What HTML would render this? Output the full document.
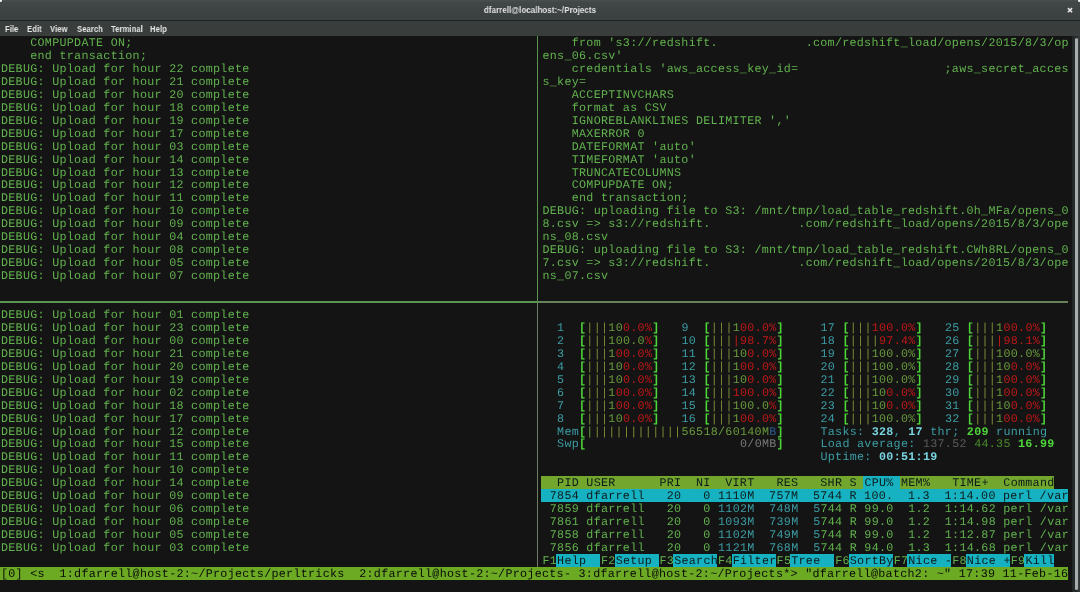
<!DOCTYPE html>
<html><head><meta charset="utf-8"><style>
html,body{margin:0;padding:0;width:1080px;height:592px;overflow:hidden;background:#141414;}
#tb{position:absolute;left:0;top:0;width:1080px;height:20px;background:linear-gradient(#4a4f4f 0px,#424747 2px,#3d4242 10px,#3b4040 20px);}
#tbl{position:absolute;left:0;top:19.6px;width:1080px;height:1.2px;background:#1e2222;}
#title{position:absolute;left:0;top:4.4px;width:1080px;height:20px;line-height:20px;text-align:center;font:bold 9.4px "Liberation Sans",sans-serif;color:#e2e2e2;transform:scaleX(0.86);transform-origin:539.5px 0;will-change:transform;}
#mb{position:absolute;left:0;top:20.8px;width:1080px;height:15.6px;background:#393e3d;}
.mi{position:absolute;top:24.3px;height:16px;line-height:16px;font:bold 9.3px "Liberation Sans",sans-serif;color:#e6e6e6;transform:scaleX(0.835);transform-origin:0 0;will-change:transform;}
#term{position:absolute;left:0;top:36.4px;width:1080px;height:556px;background:#141414;}
.s{position:absolute;height:12.95px;line-height:12.95px;font-family:"Liberation Mono",monospace;font-size:11.7px;white-space:pre;text-rendering:geometricPrecision;letter-spacing:0.297px;transform:translate(1.0px,0.9px);}
.b{font-weight:bold;}
.bgr{position:absolute;}
#wrap{position:absolute;left:0;top:0;width:1080px;height:592px;overflow:hidden;filter:blur(0.45px);}
</style></head><body><div id="wrap">
<div id="tb"></div><div id="tbl"></div><div id="title">dfarrell@localhost:~/Projects</div>
<div id="mb"></div>

<div class="mi" style="left:4.6px">File</div>
<div class="mi" style="left:26.5px">Edit</div>
<div class="mi" style="left:49.6px">View</div>
<div class="mi" style="left:76.9px">Search</div>
<div class="mi" style="left:110.6px">Terminal</div>
<div class="mi" style="left:150.4px">Help</div>
<div id="term"></div>
<div style="position:absolute;left:-1px;top:-1px;width:3px;height:3px;border-radius:50%;background:#f0f0f0"></div>
<div style="position:absolute;left:1078px;top:-1px;width:3px;height:3px;border-radius:50%;background:#f0f0f0"></div>
<svg style="position:absolute;left:1065px;top:6px" width="10" height="9" viewBox="0 0 10 9"><path d="M2.9 2.1 L7.1 6.3 M7.1 2.1 L2.9 6.3" stroke="#e8e8e8" stroke-width="1.5"/></svg>
<div style="position:absolute;left:1072px;top:36px;width:8px;height:556px;background:linear-gradient(90deg,#1c2020 0px,#252a2b 1.5px,#252a2b 5.8px,#3c4242 6.6px,#2a2f30 8px)"></div>
<div style="position:absolute;left:1074.8px;top:38px;width:3.3px;height:551.5px;border-radius:2px;background:#a8acac"></div>
<div style="position:absolute;left:536.85px;top:36.00px;width:1.5px;height:265.92px;background:#5a9650"></div>
<div style="position:absolute;left:536.90px;top:301.92px;width:1.4px;height:265.02px;background:#6e7c64"></div>
<div style="position:absolute;left:0;top:301.12px;width:537.60px;height:1.6px;background:#5a9650"></div>
<div style="position:absolute;left:537.60px;top:301.12px;width:530.68px;height:1.6px;background:#66825a"></div>
<div class="s" style="left:0.00px;top:36.00px;color:#62b24e">    COMPUPDATE ON;</div>
<div class="s" style="left:0.00px;top:48.95px;color:#62b24e">    end transaction;</div>
<div class="s" style="left:0.00px;top:61.90px;color:#62b24e">DEBUG: Upload for hour 22 complete</div>
<div class="s" style="left:0.00px;top:74.85px;color:#62b24e">DEBUG: Upload for hour 21 complete</div>
<div class="s" style="left:0.00px;top:87.80px;color:#62b24e">DEBUG: Upload for hour 20 complete</div>
<div class="s" style="left:0.00px;top:100.75px;color:#62b24e">DEBUG: Upload for hour 18 complete</div>
<div class="s" style="left:0.00px;top:113.70px;color:#62b24e">DEBUG: Upload for hour 19 complete</div>
<div class="s" style="left:0.00px;top:126.65px;color:#62b24e">DEBUG: Upload for hour 17 complete</div>
<div class="s" style="left:0.00px;top:139.60px;color:#62b24e">DEBUG: Upload for hour 03 complete</div>
<div class="s" style="left:0.00px;top:152.55px;color:#62b24e">DEBUG: Upload for hour 14 complete</div>
<div class="s" style="left:0.00px;top:165.50px;color:#62b24e">DEBUG: Upload for hour 13 complete</div>
<div class="s" style="left:0.00px;top:178.45px;color:#62b24e">DEBUG: Upload for hour 12 complete</div>
<div class="s" style="left:0.00px;top:191.40px;color:#62b24e">DEBUG: Upload for hour 11 complete</div>
<div class="s" style="left:0.00px;top:204.35px;color:#62b24e">DEBUG: Upload for hour 10 complete</div>
<div class="s" style="left:0.00px;top:217.30px;color:#62b24e">DEBUG: Upload for hour 09 complete</div>
<div class="s" style="left:0.00px;top:230.25px;color:#62b24e">DEBUG: Upload for hour 04 complete</div>
<div class="s" style="left:0.00px;top:243.20px;color:#62b24e">DEBUG: Upload for hour 08 complete</div>
<div class="s" style="left:0.00px;top:256.15px;color:#62b24e">DEBUG: Upload for hour 05 complete</div>
<div class="s" style="left:0.00px;top:269.10px;color:#62b24e">DEBUG: Upload for hour 07 complete</div>
<div class="s" style="left:0.00px;top:307.95px;color:#62b24e">DEBUG: Upload for hour 01 complete</div>
<div class="s" style="left:0.00px;top:320.90px;color:#62b24e">DEBUG: Upload for hour 23 complete</div>
<div class="s" style="left:0.00px;top:333.85px;color:#62b24e">DEBUG: Upload for hour 00 complete</div>
<div class="s" style="left:0.00px;top:346.80px;color:#62b24e">DEBUG: Upload for hour 21 complete</div>
<div class="s" style="left:0.00px;top:359.75px;color:#62b24e">DEBUG: Upload for hour 20 complete</div>
<div class="s" style="left:0.00px;top:372.70px;color:#62b24e">DEBUG: Upload for hour 19 complete</div>
<div class="s" style="left:0.00px;top:385.65px;color:#62b24e">DEBUG: Upload for hour 02 complete</div>
<div class="s" style="left:0.00px;top:398.60px;color:#62b24e">DEBUG: Upload for hour 18 complete</div>
<div class="s" style="left:0.00px;top:411.55px;color:#62b24e">DEBUG: Upload for hour 17 complete</div>
<div class="s" style="left:0.00px;top:424.50px;color:#62b24e">DEBUG: Upload for hour 12 complete</div>
<div class="s" style="left:0.00px;top:437.45px;color:#62b24e">DEBUG: Upload for hour 15 complete</div>
<div class="s" style="left:0.00px;top:450.40px;color:#62b24e">DEBUG: Upload for hour 11 complete</div>
<div class="s" style="left:0.00px;top:463.35px;color:#62b24e">DEBUG: Upload for hour 10 complete</div>
<div class="s" style="left:0.00px;top:476.30px;color:#62b24e">DEBUG: Upload for hour 14 complete</div>
<div class="s" style="left:0.00px;top:489.25px;color:#62b24e">DEBUG: Upload for hour 09 complete</div>
<div class="s" style="left:0.00px;top:502.20px;color:#62b24e">DEBUG: Upload for hour 06 complete</div>
<div class="s" style="left:0.00px;top:515.15px;color:#62b24e">DEBUG: Upload for hour 08 complete</div>
<div class="s" style="left:0.00px;top:528.10px;color:#62b24e">DEBUG: Upload for hour 05 complete</div>
<div class="s" style="left:0.00px;top:541.05px;color:#62b24e">DEBUG: Upload for hour 03 complete</div>
<div class="s" style="left:541.46px;top:36.00px;color:#62b24e">    from &#x27;s3://redshift.            .com/redshift_load/opens/2015/8/3/op</div>
<div class="s" style="left:541.46px;top:48.95px;color:#62b24e">ens_06.csv&#x27;</div>
<div class="s" style="left:541.46px;top:61.90px;color:#62b24e">    credentials &#x27;aws_access_key_id=                    ;aws_secret_acces</div>
<div class="s" style="left:541.46px;top:74.85px;color:#62b24e">s_key=</div>
<div class="s" style="left:541.46px;top:87.80px;color:#62b24e">    ACCEPTINVCHARS</div>
<div class="s" style="left:541.46px;top:100.75px;color:#62b24e">    format as CSV</div>
<div class="s" style="left:541.46px;top:113.70px;color:#62b24e">    IGNOREBLANKLINES DELIMITER &#x27;,&#x27;</div>
<div class="s" style="left:541.46px;top:126.65px;color:#62b24e">    MAXERROR 0</div>
<div class="s" style="left:541.46px;top:139.60px;color:#62b24e">    DATEFORMAT &#x27;auto&#x27;</div>
<div class="s" style="left:541.46px;top:152.55px;color:#62b24e">    TIMEFORMAT &#x27;auto&#x27;</div>
<div class="s" style="left:541.46px;top:165.50px;color:#62b24e">    TRUNCATECOLUMNS</div>
<div class="s" style="left:541.46px;top:178.45px;color:#62b24e">    COMPUPDATE ON;</div>
<div class="s" style="left:541.46px;top:191.40px;color:#62b24e">    end transaction;</div>
<div class="s" style="left:541.46px;top:204.35px;color:#62b24e">DEBUG: uploading file to S3: /mnt/tmp/load_table_redshift.0h_MFa/opens_0</div>
<div class="s" style="left:541.46px;top:217.30px;color:#62b24e">8.csv =&gt; s3://redshift.            .com/redshift_load/opens/2015/8/3/ope</div>
<div class="s" style="left:541.46px;top:230.25px;color:#62b24e">ns_08.csv</div>
<div class="s" style="left:541.46px;top:243.20px;color:#62b24e">DEBUG: uploading file to S3: /mnt/tmp/load_table_redshift.CWh8RL/opens_0</div>
<div class="s" style="left:541.46px;top:256.15px;color:#62b24e">7.csv =&gt; s3://redshift.            .com/redshift_load/opens/2015/8/3/ope</div>
<div class="s" style="left:541.46px;top:269.10px;color:#62b24e">ns_07.csv</div>
<div class="s" style="left:556.09px;top:320.90px;color:#3c9ca4">1</div>
<div class="s b" style="left:578.04px;top:320.90px;color:#4ed63a">[</div>
<div class="s" style="left:585.36px;top:320.90px;color:#7a8a38">|</div>
<div class="s" style="left:592.68px;top:320.90px;color:#7a8a38">|</div>
<div class="s" style="left:599.99px;top:320.90px;color:#7a8a38">|</div>
<div class="s" style="left:607.31px;top:320.90px;color:#6a9a3c">1</div>
<div class="s" style="left:614.63px;top:320.90px;color:#6a9a3c">0</div>
<div class="s" style="left:621.95px;top:320.90px;color:#c01818">0</div>
<div class="s" style="left:629.26px;top:320.90px;color:#c01818">.</div>
<div class="s" style="left:636.58px;top:320.90px;color:#c01818">0</div>
<div class="s" style="left:643.90px;top:320.90px;color:#c01818">%</div>
<div class="s b" style="left:651.21px;top:320.90px;color:#4ed63a">]</div>
<div class="s" style="left:556.09px;top:333.85px;color:#3c9ca4">2</div>
<div class="s b" style="left:578.04px;top:333.85px;color:#4ed63a">[</div>
<div class="s" style="left:585.36px;top:333.85px;color:#7a8a38">|</div>
<div class="s" style="left:592.68px;top:333.85px;color:#7a8a38">|</div>
<div class="s" style="left:599.99px;top:333.85px;color:#7a8a38">|</div>
<div class="s" style="left:607.31px;top:333.85px;color:#6a9a3c">1</div>
<div class="s" style="left:614.63px;top:333.85px;color:#6a9a3c">0</div>
<div class="s" style="left:621.95px;top:333.85px;color:#6a9a3c">0</div>
<div class="s" style="left:629.26px;top:333.85px;color:#6a9a3c">.</div>
<div class="s" style="left:636.58px;top:333.85px;color:#6a9a3c">0</div>
<div class="s" style="left:643.90px;top:333.85px;color:#c01818">%</div>
<div class="s b" style="left:651.21px;top:333.85px;color:#4ed63a">]</div>
<div class="s" style="left:556.09px;top:346.80px;color:#3c9ca4">3</div>
<div class="s b" style="left:578.04px;top:346.80px;color:#4ed63a">[</div>
<div class="s" style="left:585.36px;top:346.80px;color:#7a8a38">|</div>
<div class="s" style="left:592.68px;top:346.80px;color:#7a8a38">|</div>
<div class="s" style="left:599.99px;top:346.80px;color:#7a8a38">|</div>
<div class="s" style="left:607.31px;top:346.80px;color:#6a9a3c">1</div>
<div class="s" style="left:614.63px;top:346.80px;color:#c01818">0</div>
<div class="s" style="left:621.95px;top:346.80px;color:#c01818">0</div>
<div class="s" style="left:629.26px;top:346.80px;color:#c01818">.</div>
<div class="s" style="left:636.58px;top:346.80px;color:#c01818">0</div>
<div class="s" style="left:643.90px;top:346.80px;color:#c01818">%</div>
<div class="s b" style="left:651.21px;top:346.80px;color:#4ed63a">]</div>
<div class="s" style="left:556.09px;top:359.75px;color:#3c9ca4">4</div>
<div class="s b" style="left:578.04px;top:359.75px;color:#4ed63a">[</div>
<div class="s" style="left:585.36px;top:359.75px;color:#7a8a38">|</div>
<div class="s" style="left:592.68px;top:359.75px;color:#7a8a38">|</div>
<div class="s" style="left:599.99px;top:359.75px;color:#7a8a38">|</div>
<div class="s" style="left:607.31px;top:359.75px;color:#6a9a3c">1</div>
<div class="s" style="left:614.63px;top:359.75px;color:#6a9a3c">0</div>
<div class="s" style="left:621.95px;top:359.75px;color:#c01818">0</div>
<div class="s" style="left:629.26px;top:359.75px;color:#c01818">.</div>
<div class="s" style="left:636.58px;top:359.75px;color:#c01818">0</div>
<div class="s" style="left:643.90px;top:359.75px;color:#c01818">%</div>
<div class="s b" style="left:651.21px;top:359.75px;color:#4ed63a">]</div>
<div class="s" style="left:556.09px;top:372.70px;color:#3c9ca4">5</div>
<div class="s b" style="left:578.04px;top:372.70px;color:#4ed63a">[</div>
<div class="s" style="left:585.36px;top:372.70px;color:#7a8a38">|</div>
<div class="s" style="left:592.68px;top:372.70px;color:#7a8a38">|</div>
<div class="s" style="left:599.99px;top:372.70px;color:#7a8a38">|</div>
<div class="s" style="left:607.31px;top:372.70px;color:#6a9a3c">1</div>
<div class="s" style="left:614.63px;top:372.70px;color:#6a9a3c">0</div>
<div class="s" style="left:621.95px;top:372.70px;color:#c01818">0</div>
<div class="s" style="left:629.26px;top:372.70px;color:#c01818">.</div>
<div class="s" style="left:636.58px;top:372.70px;color:#c01818">0</div>
<div class="s" style="left:643.90px;top:372.70px;color:#c01818">%</div>
<div class="s b" style="left:651.21px;top:372.70px;color:#4ed63a">]</div>
<div class="s" style="left:556.09px;top:385.65px;color:#3c9ca4">6</div>
<div class="s b" style="left:578.04px;top:385.65px;color:#4ed63a">[</div>
<div class="s" style="left:585.36px;top:385.65px;color:#7a8a38">|</div>
<div class="s" style="left:592.68px;top:385.65px;color:#7a8a38">|</div>
<div class="s" style="left:599.99px;top:385.65px;color:#7a8a38">|</div>
<div class="s" style="left:607.31px;top:385.65px;color:#6a9a3c">1</div>
<div class="s" style="left:614.63px;top:385.65px;color:#c01818">0</div>
<div class="s" style="left:621.95px;top:385.65px;color:#c01818">0</div>
<div class="s" style="left:629.26px;top:385.65px;color:#c01818">.</div>
<div class="s" style="left:636.58px;top:385.65px;color:#c01818">0</div>
<div class="s" style="left:643.90px;top:385.65px;color:#c01818">%</div>
<div class="s b" style="left:651.21px;top:385.65px;color:#4ed63a">]</div>
<div class="s" style="left:556.09px;top:398.60px;color:#3c9ca4">7</div>
<div class="s b" style="left:578.04px;top:398.60px;color:#4ed63a">[</div>
<div class="s" style="left:585.36px;top:398.60px;color:#7a8a38">|</div>
<div class="s" style="left:592.68px;top:398.60px;color:#7a8a38">|</div>
<div class="s" style="left:599.99px;top:398.60px;color:#7a8a38">|</div>
<div class="s" style="left:607.31px;top:398.60px;color:#6a9a3c">1</div>
<div class="s" style="left:614.63px;top:398.60px;color:#c01818">0</div>
<div class="s" style="left:621.95px;top:398.60px;color:#c01818">0</div>
<div class="s" style="left:629.26px;top:398.60px;color:#c01818">.</div>
<div class="s" style="left:636.58px;top:398.60px;color:#c01818">0</div>
<div class="s" style="left:643.90px;top:398.60px;color:#c01818">%</div>
<div class="s b" style="left:651.21px;top:398.60px;color:#4ed63a">]</div>
<div class="s" style="left:556.09px;top:411.55px;color:#3c9ca4">8</div>
<div class="s b" style="left:578.04px;top:411.55px;color:#4ed63a">[</div>
<div class="s" style="left:585.36px;top:411.55px;color:#7a8a38">|</div>
<div class="s" style="left:592.68px;top:411.55px;color:#7a8a38">|</div>
<div class="s" style="left:599.99px;top:411.55px;color:#7a8a38">|</div>
<div class="s" style="left:607.31px;top:411.55px;color:#6a9a3c">1</div>
<div class="s" style="left:614.63px;top:411.55px;color:#6a9a3c">0</div>
<div class="s" style="left:621.95px;top:411.55px;color:#c01818">0</div>
<div class="s" style="left:629.26px;top:411.55px;color:#c01818">.</div>
<div class="s" style="left:636.58px;top:411.55px;color:#c01818">0</div>
<div class="s" style="left:643.90px;top:411.55px;color:#c01818">%</div>
<div class="s b" style="left:651.21px;top:411.55px;color:#4ed63a">]</div>
<div class="s" style="left:680.48px;top:320.90px;color:#3c9ca4">9</div>
<div class="s b" style="left:702.43px;top:320.90px;color:#4ed63a">[</div>
<div class="s" style="left:709.75px;top:320.90px;color:#7a8a38">|</div>
<div class="s" style="left:717.07px;top:320.90px;color:#7a8a38">|</div>
<div class="s" style="left:724.38px;top:320.90px;color:#7a8a38">|</div>
<div class="s" style="left:731.70px;top:320.90px;color:#6a9a3c">1</div>
<div class="s" style="left:739.02px;top:320.90px;color:#c01818">0</div>
<div class="s" style="left:746.33px;top:320.90px;color:#c01818">0</div>
<div class="s" style="left:753.65px;top:320.90px;color:#c01818">.</div>
<div class="s" style="left:760.97px;top:320.90px;color:#c01818">0</div>
<div class="s" style="left:768.28px;top:320.90px;color:#c01818">%</div>
<div class="s b" style="left:775.60px;top:320.90px;color:#4ed63a">]</div>
<div class="s" style="left:680.48px;top:333.85px;color:#3c9ca4">10</div>
<div class="s b" style="left:702.43px;top:333.85px;color:#4ed63a">[</div>
<div class="s" style="left:709.75px;top:333.85px;color:#7a8a38">|</div>
<div class="s" style="left:717.07px;top:333.85px;color:#7a8a38">|</div>
<div class="s" style="left:724.38px;top:333.85px;color:#7a8a38">|</div>
<div class="s" style="left:731.70px;top:333.85px;color:#c01818">|</div>
<div class="s" style="left:739.02px;top:333.85px;color:#c01818">9</div>
<div class="s" style="left:746.33px;top:333.85px;color:#c01818">8</div>
<div class="s" style="left:753.65px;top:333.85px;color:#c01818">.</div>
<div class="s" style="left:760.97px;top:333.85px;color:#c01818">7</div>
<div class="s" style="left:768.28px;top:333.85px;color:#c01818">%</div>
<div class="s b" style="left:775.60px;top:333.85px;color:#4ed63a">]</div>
<div class="s" style="left:680.48px;top:346.80px;color:#3c9ca4">11</div>
<div class="s b" style="left:702.43px;top:346.80px;color:#4ed63a">[</div>
<div class="s" style="left:709.75px;top:346.80px;color:#7a8a38">|</div>
<div class="s" style="left:717.07px;top:346.80px;color:#7a8a38">|</div>
<div class="s" style="left:724.38px;top:346.80px;color:#7a8a38">|</div>
<div class="s" style="left:731.70px;top:346.80px;color:#6a9a3c">1</div>
<div class="s" style="left:739.02px;top:346.80px;color:#6a9a3c">0</div>
<div class="s" style="left:746.33px;top:346.80px;color:#c01818">0</div>
<div class="s" style="left:753.65px;top:346.80px;color:#c01818">.</div>
<div class="s" style="left:760.97px;top:346.80px;color:#c01818">0</div>
<div class="s" style="left:768.28px;top:346.80px;color:#c01818">%</div>
<div class="s b" style="left:775.60px;top:346.80px;color:#4ed63a">]</div>
<div class="s" style="left:680.48px;top:359.75px;color:#3c9ca4">12</div>
<div class="s b" style="left:702.43px;top:359.75px;color:#4ed63a">[</div>
<div class="s" style="left:709.75px;top:359.75px;color:#7a8a38">|</div>
<div class="s" style="left:717.07px;top:359.75px;color:#7a8a38">|</div>
<div class="s" style="left:724.38px;top:359.75px;color:#7a8a38">|</div>
<div class="s" style="left:731.70px;top:359.75px;color:#6a9a3c">1</div>
<div class="s" style="left:739.02px;top:359.75px;color:#c01818">0</div>
<div class="s" style="left:746.33px;top:359.75px;color:#c01818">0</div>
<div class="s" style="left:753.65px;top:359.75px;color:#c01818">.</div>
<div class="s" style="left:760.97px;top:359.75px;color:#c01818">0</div>
<div class="s" style="left:768.28px;top:359.75px;color:#c01818">%</div>
<div class="s b" style="left:775.60px;top:359.75px;color:#4ed63a">]</div>
<div class="s" style="left:680.48px;top:372.70px;color:#3c9ca4">13</div>
<div class="s b" style="left:702.43px;top:372.70px;color:#4ed63a">[</div>
<div class="s" style="left:709.75px;top:372.70px;color:#7a8a38">|</div>
<div class="s" style="left:717.07px;top:372.70px;color:#7a8a38">|</div>
<div class="s" style="left:724.38px;top:372.70px;color:#7a8a38">|</div>
<div class="s" style="left:731.70px;top:372.70px;color:#6a9a3c">1</div>
<div class="s" style="left:739.02px;top:372.70px;color:#6a9a3c">0</div>
<div class="s" style="left:746.33px;top:372.70px;color:#c01818">0</div>
<div class="s" style="left:753.65px;top:372.70px;color:#c01818">.</div>
<div class="s" style="left:760.97px;top:372.70px;color:#c01818">0</div>
<div class="s" style="left:768.28px;top:372.70px;color:#c01818">%</div>
<div class="s b" style="left:775.60px;top:372.70px;color:#4ed63a">]</div>
<div class="s" style="left:680.48px;top:385.65px;color:#3c9ca4">14</div>
<div class="s b" style="left:702.43px;top:385.65px;color:#4ed63a">[</div>
<div class="s" style="left:709.75px;top:385.65px;color:#7a8a38">|</div>
<div class="s" style="left:717.07px;top:385.65px;color:#7a8a38">|</div>
<div class="s" style="left:724.38px;top:385.65px;color:#7a8a38">|</div>
<div class="s" style="left:731.70px;top:385.65px;color:#c01818">1</div>
<div class="s" style="left:739.02px;top:385.65px;color:#c01818">0</div>
<div class="s" style="left:746.33px;top:385.65px;color:#c01818">0</div>
<div class="s" style="left:753.65px;top:385.65px;color:#c01818">.</div>
<div class="s" style="left:760.97px;top:385.65px;color:#c01818">0</div>
<div class="s" style="left:768.28px;top:385.65px;color:#c01818">%</div>
<div class="s b" style="left:775.60px;top:385.65px;color:#4ed63a">]</div>
<div class="s" style="left:680.48px;top:398.60px;color:#3c9ca4">15</div>
<div class="s b" style="left:702.43px;top:398.60px;color:#4ed63a">[</div>
<div class="s" style="left:709.75px;top:398.60px;color:#7a8a38">|</div>
<div class="s" style="left:717.07px;top:398.60px;color:#7a8a38">|</div>
<div class="s" style="left:724.38px;top:398.60px;color:#7a8a38">|</div>
<div class="s" style="left:731.70px;top:398.60px;color:#6a9a3c">1</div>
<div class="s" style="left:739.02px;top:398.60px;color:#6a9a3c">0</div>
<div class="s" style="left:746.33px;top:398.60px;color:#6a9a3c">0</div>
<div class="s" style="left:753.65px;top:398.60px;color:#6a9a3c">.</div>
<div class="s" style="left:760.97px;top:398.60px;color:#6a9a3c">0</div>
<div class="s" style="left:768.28px;top:398.60px;color:#c01818">%</div>
<div class="s b" style="left:775.60px;top:398.60px;color:#4ed63a">]</div>
<div class="s" style="left:680.48px;top:411.55px;color:#3c9ca4">16</div>
<div class="s b" style="left:702.43px;top:411.55px;color:#4ed63a">[</div>
<div class="s" style="left:709.75px;top:411.55px;color:#7a8a38">|</div>
<div class="s" style="left:717.07px;top:411.55px;color:#7a8a38">|</div>
<div class="s" style="left:724.38px;top:411.55px;color:#7a8a38">|</div>
<div class="s" style="left:731.70px;top:411.55px;color:#6a9a3c">1</div>
<div class="s" style="left:739.02px;top:411.55px;color:#c01818">0</div>
<div class="s" style="left:746.33px;top:411.55px;color:#c01818">0</div>
<div class="s" style="left:753.65px;top:411.55px;color:#c01818">.</div>
<div class="s" style="left:760.97px;top:411.55px;color:#c01818">0</div>
<div class="s" style="left:768.28px;top:411.55px;color:#c01818">%</div>
<div class="s b" style="left:775.60px;top:411.55px;color:#4ed63a">]</div>
<div class="s" style="left:819.50px;top:320.90px;color:#3c9ca4">17</div>
<div class="s b" style="left:841.46px;top:320.90px;color:#4ed63a">[</div>
<div class="s" style="left:848.77px;top:320.90px;color:#7a8a38">|</div>
<div class="s" style="left:856.09px;top:320.90px;color:#7a8a38">|</div>
<div class="s" style="left:863.41px;top:320.90px;color:#7a8a38">|</div>
<div class="s" style="left:870.72px;top:320.90px;color:#c01818">1</div>
<div class="s" style="left:878.04px;top:320.90px;color:#c01818">0</div>
<div class="s" style="left:885.36px;top:320.90px;color:#c01818">0</div>
<div class="s" style="left:892.67px;top:320.90px;color:#c01818">.</div>
<div class="s" style="left:899.99px;top:320.90px;color:#c01818">0</div>
<div class="s" style="left:907.31px;top:320.90px;color:#c01818">%</div>
<div class="s b" style="left:914.62px;top:320.90px;color:#4ed63a">]</div>
<div class="s" style="left:819.50px;top:333.85px;color:#3c9ca4">18</div>
<div class="s b" style="left:841.46px;top:333.85px;color:#4ed63a">[</div>
<div class="s" style="left:848.77px;top:333.85px;color:#7a8a38">|</div>
<div class="s" style="left:856.09px;top:333.85px;color:#7a8a38">|</div>
<div class="s" style="left:863.41px;top:333.85px;color:#7a8a38">|</div>
<div class="s" style="left:870.72px;top:333.85px;color:#7a8a38">|</div>
<div class="s" style="left:878.04px;top:333.85px;color:#c01818">9</div>
<div class="s" style="left:885.36px;top:333.85px;color:#c01818">7</div>
<div class="s" style="left:892.67px;top:333.85px;color:#c01818">.</div>
<div class="s" style="left:899.99px;top:333.85px;color:#c01818">4</div>
<div class="s" style="left:907.31px;top:333.85px;color:#c01818">%</div>
<div class="s b" style="left:914.62px;top:333.85px;color:#4ed63a">]</div>
<div class="s" style="left:819.50px;top:346.80px;color:#3c9ca4">19</div>
<div class="s b" style="left:841.46px;top:346.80px;color:#4ed63a">[</div>
<div class="s" style="left:848.77px;top:346.80px;color:#7a8a38">|</div>
<div class="s" style="left:856.09px;top:346.80px;color:#7a8a38">|</div>
<div class="s" style="left:863.41px;top:346.80px;color:#7a8a38">|</div>
<div class="s" style="left:870.72px;top:346.80px;color:#6a9a3c">1</div>
<div class="s" style="left:878.04px;top:346.80px;color:#6a9a3c">0</div>
<div class="s" style="left:885.36px;top:346.80px;color:#6a9a3c">0</div>
<div class="s" style="left:892.67px;top:346.80px;color:#6a9a3c">.</div>
<div class="s" style="left:899.99px;top:346.80px;color:#6a9a3c">0</div>
<div class="s" style="left:907.31px;top:346.80px;color:#6a9a3c">%</div>
<div class="s b" style="left:914.62px;top:346.80px;color:#4ed63a">]</div>
<div class="s" style="left:819.50px;top:359.75px;color:#3c9ca4">20</div>
<div class="s b" style="left:841.46px;top:359.75px;color:#4ed63a">[</div>
<div class="s" style="left:848.77px;top:359.75px;color:#7a8a38">|</div>
<div class="s" style="left:856.09px;top:359.75px;color:#7a8a38">|</div>
<div class="s" style="left:863.41px;top:359.75px;color:#7a8a38">|</div>
<div class="s" style="left:870.72px;top:359.75px;color:#6a9a3c">1</div>
<div class="s" style="left:878.04px;top:359.75px;color:#6a9a3c">0</div>
<div class="s" style="left:885.36px;top:359.75px;color:#6a9a3c">0</div>
<div class="s" style="left:892.67px;top:359.75px;color:#6a9a3c">.</div>
<div class="s" style="left:899.99px;top:359.75px;color:#6a9a3c">0</div>
<div class="s" style="left:907.31px;top:359.75px;color:#6a9a3c">%</div>
<div class="s b" style="left:914.62px;top:359.75px;color:#4ed63a">]</div>
<div class="s" style="left:819.50px;top:372.70px;color:#3c9ca4">21</div>
<div class="s b" style="left:841.46px;top:372.70px;color:#4ed63a">[</div>
<div class="s" style="left:848.77px;top:372.70px;color:#7a8a38">|</div>
<div class="s" style="left:856.09px;top:372.70px;color:#7a8a38">|</div>
<div class="s" style="left:863.41px;top:372.70px;color:#7a8a38">|</div>
<div class="s" style="left:870.72px;top:372.70px;color:#6a9a3c">1</div>
<div class="s" style="left:878.04px;top:372.70px;color:#6a9a3c">0</div>
<div class="s" style="left:885.36px;top:372.70px;color:#6a9a3c">0</div>
<div class="s" style="left:892.67px;top:372.70px;color:#6a9a3c">.</div>
<div class="s" style="left:899.99px;top:372.70px;color:#6a9a3c">0</div>
<div class="s" style="left:907.31px;top:372.70px;color:#6a9a3c">%</div>
<div class="s b" style="left:914.62px;top:372.70px;color:#4ed63a">]</div>
<div class="s" style="left:819.50px;top:385.65px;color:#3c9ca4">22</div>
<div class="s b" style="left:841.46px;top:385.65px;color:#4ed63a">[</div>
<div class="s" style="left:848.77px;top:385.65px;color:#7a8a38">|</div>
<div class="s" style="left:856.09px;top:385.65px;color:#7a8a38">|</div>
<div class="s" style="left:863.41px;top:385.65px;color:#7a8a38">|</div>
<div class="s" style="left:870.72px;top:385.65px;color:#6a9a3c">1</div>
<div class="s" style="left:878.04px;top:385.65px;color:#6a9a3c">0</div>
<div class="s" style="left:885.36px;top:385.65px;color:#c01818">0</div>
<div class="s" style="left:892.67px;top:385.65px;color:#c01818">.</div>
<div class="s" style="left:899.99px;top:385.65px;color:#c01818">0</div>
<div class="s" style="left:907.31px;top:385.65px;color:#c01818">%</div>
<div class="s b" style="left:914.62px;top:385.65px;color:#4ed63a">]</div>
<div class="s" style="left:819.50px;top:398.60px;color:#3c9ca4">23</div>
<div class="s b" style="left:841.46px;top:398.60px;color:#4ed63a">[</div>
<div class="s" style="left:848.77px;top:398.60px;color:#7a8a38">|</div>
<div class="s" style="left:856.09px;top:398.60px;color:#7a8a38">|</div>
<div class="s" style="left:863.41px;top:398.60px;color:#7a8a38">|</div>
<div class="s" style="left:870.72px;top:398.60px;color:#6a9a3c">1</div>
<div class="s" style="left:878.04px;top:398.60px;color:#6a9a3c">0</div>
<div class="s" style="left:885.36px;top:398.60px;color:#c01818">0</div>
<div class="s" style="left:892.67px;top:398.60px;color:#c01818">.</div>
<div class="s" style="left:899.99px;top:398.60px;color:#c01818">0</div>
<div class="s" style="left:907.31px;top:398.60px;color:#c01818">%</div>
<div class="s b" style="left:914.62px;top:398.60px;color:#4ed63a">]</div>
<div class="s" style="left:819.50px;top:411.55px;color:#3c9ca4">24</div>
<div class="s b" style="left:841.46px;top:411.55px;color:#4ed63a">[</div>
<div class="s" style="left:848.77px;top:411.55px;color:#7a8a38">|</div>
<div class="s" style="left:856.09px;top:411.55px;color:#7a8a38">|</div>
<div class="s" style="left:863.41px;top:411.55px;color:#7a8a38">|</div>
<div class="s" style="left:870.72px;top:411.55px;color:#6a9a3c">1</div>
<div class="s" style="left:878.04px;top:411.55px;color:#6a9a3c">0</div>
<div class="s" style="left:885.36px;top:411.55px;color:#6a9a3c">0</div>
<div class="s" style="left:892.67px;top:411.55px;color:#6a9a3c">.</div>
<div class="s" style="left:899.99px;top:411.55px;color:#6a9a3c">0</div>
<div class="s" style="left:907.31px;top:411.55px;color:#6a9a3c">%</div>
<div class="s b" style="left:914.62px;top:411.55px;color:#4ed63a">]</div>
<div class="s" style="left:943.89px;top:320.90px;color:#3c9ca4">25</div>
<div class="s b" style="left:965.84px;top:320.90px;color:#4ed63a">[</div>
<div class="s" style="left:973.16px;top:320.90px;color:#7a8a38">|</div>
<div class="s" style="left:980.48px;top:320.90px;color:#7a8a38">|</div>
<div class="s" style="left:987.80px;top:320.90px;color:#7a8a38">|</div>
<div class="s" style="left:995.11px;top:320.90px;color:#6a9a3c">1</div>
<div class="s" style="left:1002.43px;top:320.90px;color:#c01818">0</div>
<div class="s" style="left:1009.75px;top:320.90px;color:#c01818">0</div>
<div class="s" style="left:1017.06px;top:320.90px;color:#c01818">.</div>
<div class="s" style="left:1024.38px;top:320.90px;color:#c01818">0</div>
<div class="s" style="left:1031.70px;top:320.90px;color:#c01818">%</div>
<div class="s b" style="left:1039.01px;top:320.90px;color:#4ed63a">]</div>
<div class="s" style="left:943.89px;top:333.85px;color:#3c9ca4">26</div>
<div class="s b" style="left:965.84px;top:333.85px;color:#4ed63a">[</div>
<div class="s" style="left:973.16px;top:333.85px;color:#7a8a38">|</div>
<div class="s" style="left:980.48px;top:333.85px;color:#7a8a38">|</div>
<div class="s" style="left:987.80px;top:333.85px;color:#7a8a38">|</div>
<div class="s" style="left:995.11px;top:333.85px;color:#c01818">|</div>
<div class="s" style="left:1002.43px;top:333.85px;color:#c01818">9</div>
<div class="s" style="left:1009.75px;top:333.85px;color:#c01818">8</div>
<div class="s" style="left:1017.06px;top:333.85px;color:#c01818">.</div>
<div class="s" style="left:1024.38px;top:333.85px;color:#c01818">1</div>
<div class="s" style="left:1031.70px;top:333.85px;color:#c01818">%</div>
<div class="s b" style="left:1039.01px;top:333.85px;color:#4ed63a">]</div>
<div class="s" style="left:943.89px;top:346.80px;color:#3c9ca4">27</div>
<div class="s b" style="left:965.84px;top:346.80px;color:#4ed63a">[</div>
<div class="s" style="left:973.16px;top:346.80px;color:#7a8a38">|</div>
<div class="s" style="left:980.48px;top:346.80px;color:#7a8a38">|</div>
<div class="s" style="left:987.80px;top:346.80px;color:#7a8a38">|</div>
<div class="s" style="left:995.11px;top:346.80px;color:#6a9a3c">1</div>
<div class="s" style="left:1002.43px;top:346.80px;color:#6a9a3c">0</div>
<div class="s" style="left:1009.75px;top:346.80px;color:#6a9a3c">0</div>
<div class="s" style="left:1017.06px;top:346.80px;color:#6a9a3c">.</div>
<div class="s" style="left:1024.38px;top:346.80px;color:#6a9a3c">0</div>
<div class="s" style="left:1031.70px;top:346.80px;color:#6a9a3c">%</div>
<div class="s b" style="left:1039.01px;top:346.80px;color:#4ed63a">]</div>
<div class="s" style="left:943.89px;top:359.75px;color:#3c9ca4">28</div>
<div class="s b" style="left:965.84px;top:359.75px;color:#4ed63a">[</div>
<div class="s" style="left:973.16px;top:359.75px;color:#7a8a38">|</div>
<div class="s" style="left:980.48px;top:359.75px;color:#7a8a38">|</div>
<div class="s" style="left:987.80px;top:359.75px;color:#7a8a38">|</div>
<div class="s" style="left:995.11px;top:359.75px;color:#6a9a3c">1</div>
<div class="s" style="left:1002.43px;top:359.75px;color:#6a9a3c">0</div>
<div class="s" style="left:1009.75px;top:359.75px;color:#c01818">0</div>
<div class="s" style="left:1017.06px;top:359.75px;color:#c01818">.</div>
<div class="s" style="left:1024.38px;top:359.75px;color:#c01818">0</div>
<div class="s" style="left:1031.70px;top:359.75px;color:#c01818">%</div>
<div class="s b" style="left:1039.01px;top:359.75px;color:#4ed63a">]</div>
<div class="s" style="left:943.89px;top:372.70px;color:#3c9ca4">29</div>
<div class="s b" style="left:965.84px;top:372.70px;color:#4ed63a">[</div>
<div class="s" style="left:973.16px;top:372.70px;color:#7a8a38">|</div>
<div class="s" style="left:980.48px;top:372.70px;color:#7a8a38">|</div>
<div class="s" style="left:987.80px;top:372.70px;color:#7a8a38">|</div>
<div class="s" style="left:995.11px;top:372.70px;color:#6a9a3c">1</div>
<div class="s" style="left:1002.43px;top:372.70px;color:#c01818">0</div>
<div class="s" style="left:1009.75px;top:372.70px;color:#c01818">0</div>
<div class="s" style="left:1017.06px;top:372.70px;color:#c01818">.</div>
<div class="s" style="left:1024.38px;top:372.70px;color:#c01818">0</div>
<div class="s" style="left:1031.70px;top:372.70px;color:#c01818">%</div>
<div class="s b" style="left:1039.01px;top:372.70px;color:#4ed63a">]</div>
<div class="s" style="left:943.89px;top:385.65px;color:#3c9ca4">30</div>
<div class="s b" style="left:965.84px;top:385.65px;color:#4ed63a">[</div>
<div class="s" style="left:973.16px;top:385.65px;color:#7a8a38">|</div>
<div class="s" style="left:980.48px;top:385.65px;color:#7a8a38">|</div>
<div class="s" style="left:987.80px;top:385.65px;color:#7a8a38">|</div>
<div class="s" style="left:995.11px;top:385.65px;color:#6a9a3c">1</div>
<div class="s" style="left:1002.43px;top:385.65px;color:#c01818">0</div>
<div class="s" style="left:1009.75px;top:385.65px;color:#c01818">0</div>
<div class="s" style="left:1017.06px;top:385.65px;color:#c01818">.</div>
<div class="s" style="left:1024.38px;top:385.65px;color:#c01818">0</div>
<div class="s" style="left:1031.70px;top:385.65px;color:#c01818">%</div>
<div class="s b" style="left:1039.01px;top:385.65px;color:#4ed63a">]</div>
<div class="s" style="left:943.89px;top:398.60px;color:#3c9ca4">31</div>
<div class="s b" style="left:965.84px;top:398.60px;color:#4ed63a">[</div>
<div class="s" style="left:973.16px;top:398.60px;color:#7a8a38">|</div>
<div class="s" style="left:980.48px;top:398.60px;color:#7a8a38">|</div>
<div class="s" style="left:987.80px;top:398.60px;color:#7a8a38">|</div>
<div class="s" style="left:995.11px;top:398.60px;color:#6a9a3c">1</div>
<div class="s" style="left:1002.43px;top:398.60px;color:#6a9a3c">0</div>
<div class="s" style="left:1009.75px;top:398.60px;color:#c01818">0</div>
<div class="s" style="left:1017.06px;top:398.60px;color:#c01818">.</div>
<div class="s" style="left:1024.38px;top:398.60px;color:#c01818">0</div>
<div class="s" style="left:1031.70px;top:398.60px;color:#c01818">%</div>
<div class="s b" style="left:1039.01px;top:398.60px;color:#4ed63a">]</div>
<div class="s" style="left:943.89px;top:411.55px;color:#3c9ca4">32</div>
<div class="s b" style="left:965.84px;top:411.55px;color:#4ed63a">[</div>
<div class="s" style="left:973.16px;top:411.55px;color:#7a8a38">|</div>
<div class="s" style="left:980.48px;top:411.55px;color:#7a8a38">|</div>
<div class="s" style="left:987.80px;top:411.55px;color:#7a8a38">|</div>
<div class="s" style="left:995.11px;top:411.55px;color:#6a9a3c">1</div>
<div class="s" style="left:1002.43px;top:411.55px;color:#c01818">0</div>
<div class="s" style="left:1009.75px;top:411.55px;color:#c01818">0</div>
<div class="s" style="left:1017.06px;top:411.55px;color:#c01818">.</div>
<div class="s" style="left:1024.38px;top:411.55px;color:#c01818">0</div>
<div class="s" style="left:1031.70px;top:411.55px;color:#c01818">%</div>
<div class="s b" style="left:1039.01px;top:411.55px;color:#4ed63a">]</div>
<div class="s" style="left:556.09px;top:424.50px;color:#3c9ca4">Mem</div>
<div class="s b" style="left:578.04px;top:424.50px;color:#4ed63a">[</div>
<div class="s" style="left:585.36px;top:424.50px;color:#6a9a3c">|</div>
<div class="s" style="left:592.68px;top:424.50px;color:#7a8a38">||||||||||||</div>
<div class="s" style="left:680.48px;top:424.50px;color:#6a9a3c">56518/60140M</div>
<div class="s" style="left:768.28px;top:424.50px;color:#2a5a90">B</div>
<div class="s b" style="left:775.60px;top:424.50px;color:#4ed63a">]</div>
<div class="s" style="left:556.09px;top:437.45px;color:#3c9ca4">Swp</div>
<div class="s b" style="left:578.04px;top:437.45px;color:#4ed63a">[</div>
<div class="s" style="left:739.02px;top:437.45px;color:#7a7a7a">0/0MB</div>
<div class="s b" style="left:775.60px;top:437.45px;color:#4ed63a">]</div>
<div class="s" style="left:819.50px;top:424.50px;color:#3c9ca4">Tasks: </div>
<div class="s b" style="left:870.72px;top:424.50px;color:#78d4e0">328</div>
<div class="s" style="left:892.67px;top:424.50px;color:#3c9ca4">, </div>
<div class="s b" style="left:907.31px;top:424.50px;color:#78d4e0">17</div>
<div class="s" style="left:921.94px;top:424.50px;color:#3c9ca4"> thr; </div>
<div class="s b" style="left:965.84px;top:424.50px;color:#4ed63a">209</div>
<div class="s" style="left:987.80px;top:424.50px;color:#3c9ca4"> running</div>
<div class="s" style="left:819.50px;top:437.45px;color:#3c9ca4">Load average: </div>
<div class="s" style="left:921.94px;top:437.45px;color:#5a5a5a">137.52</div>
<div class="s" style="left:973.16px;top:437.45px;color:#4a8a2c">44.35</div>
<div class="s b" style="left:1017.06px;top:437.45px;color:#4ed63a">16.99</div>
<div class="s" style="left:819.50px;top:450.40px;color:#3c9ca4">Uptime: </div>
<div class="s b" style="left:878.04px;top:450.40px;color:#78d4e0">00:51:19</div>
<div class="bgr" style="left:541.46px;top:476.30px;width:321.95px;height:12.95px;background:#72a62c"></div>
<div class="s" style="left:541.46px;top:476.30px;color:#0e1a1a">  PID USER      PRI  NI  VIRT   RES   SHR S </div>
<div class="bgr" style="left:863.41px;top:476.30px;width:36.59px;height:12.95px;background:#16b2c2"></div>
<div class="s" style="left:863.41px;top:476.30px;color:#0e1a1a">CPU% </div>
<div class="bgr" style="left:899.99px;top:476.30px;width:153.66px;height:12.95px;background:#72a62c"></div>
<div class="s" style="left:899.99px;top:476.30px;color:#0e1a1a">MEM%   TIME+  Command</div>
<div class="bgr" style="left:541.46px;top:489.25px;width:526.82px;height:12.95px;background:#16b2c2"></div>
<div class="s" style="left:541.46px;top:489.25px;color:#0e1a1a"> 7854 dfarrell   20   0 1110M  757M  5744 R 100.  1.3  1:14.00 perl /var</div>
<div class="s" style="left:541.46px;top:502.20px;color:#62b24e"> 7859 dfarrell   20   0 </div>
<div class="s" style="left:717.07px;top:502.20px;color:#3c9ca4">1102M  748M </div>
<div class="s" style="left:804.87px;top:502.20px;color:#3c9ca4"> 5</div>
<div class="s" style="left:819.50px;top:502.20px;color:#62b24e">744 R 99.0  1.2  1:14.62 perl /var</div>
<div class="s" style="left:541.46px;top:515.15px;color:#62b24e"> 7861 dfarrell   20   0 </div>
<div class="s" style="left:717.07px;top:515.15px;color:#3c9ca4">1093M  739M </div>
<div class="s" style="left:804.87px;top:515.15px;color:#3c9ca4"> 5</div>
<div class="s" style="left:819.50px;top:515.15px;color:#62b24e">744 R 99.0  1.2  1:14.98 perl /var</div>
<div class="s" style="left:541.46px;top:528.10px;color:#62b24e"> 7858 dfarrell   20   0 </div>
<div class="s" style="left:717.07px;top:528.10px;color:#3c9ca4">1102M  749M </div>
<div class="s" style="left:804.87px;top:528.10px;color:#3c9ca4"> 5</div>
<div class="s" style="left:819.50px;top:528.10px;color:#62b24e">744 R 99.0  1.2  1:12.87 perl /var</div>
<div class="s" style="left:541.46px;top:541.05px;color:#62b24e"> 7856 dfarrell   20   0 </div>
<div class="s" style="left:717.07px;top:541.05px;color:#3c9ca4">1121M  768M </div>
<div class="s" style="left:804.87px;top:541.05px;color:#3c9ca4"> 5</div>
<div class="s" style="left:819.50px;top:541.05px;color:#62b24e">744 R 94.0  1.3  1:14.68 perl /var</div>
<div class="s" style="left:541.46px;top:554.00px;color:#62b24e">F1</div>
<div class="bgr" style="left:556.09px;top:554.00px;width:43.90px;height:12.95px;background:#16b2c2"></div>
<div class="s" style="left:556.09px;top:554.00px;color:#0e1a1a">Help  </div>
<div class="s" style="left:599.99px;top:554.00px;color:#62b24e">F2</div>
<div class="bgr" style="left:614.63px;top:554.00px;width:43.90px;height:12.95px;background:#16b2c2"></div>
<div class="s" style="left:614.63px;top:554.00px;color:#0e1a1a">Setup </div>
<div class="s" style="left:658.53px;top:554.00px;color:#62b24e">F3</div>
<div class="bgr" style="left:673.16px;top:554.00px;width:43.90px;height:12.95px;background:#16b2c2"></div>
<div class="s" style="left:673.16px;top:554.00px;color:#0e1a1a">Search</div>
<div class="s" style="left:717.07px;top:554.00px;color:#62b24e">F4</div>
<div class="bgr" style="left:731.70px;top:554.00px;width:43.90px;height:12.95px;background:#16b2c2"></div>
<div class="s" style="left:731.70px;top:554.00px;color:#0e1a1a">Filter</div>
<div class="s" style="left:775.60px;top:554.00px;color:#62b24e">F5</div>
<div class="bgr" style="left:790.24px;top:554.00px;width:43.90px;height:12.95px;background:#16b2c2"></div>
<div class="s" style="left:790.24px;top:554.00px;color:#0e1a1a">Tree  </div>
<div class="s" style="left:834.14px;top:554.00px;color:#62b24e">F6</div>
<div class="bgr" style="left:848.77px;top:554.00px;width:43.90px;height:12.95px;background:#16b2c2"></div>
<div class="s" style="left:848.77px;top:554.00px;color:#0e1a1a">SortBy</div>
<div class="s" style="left:892.67px;top:554.00px;color:#62b24e">F7</div>
<div class="bgr" style="left:907.31px;top:554.00px;width:43.90px;height:12.95px;background:#16b2c2"></div>
<div class="s" style="left:907.31px;top:554.00px;color:#0e1a1a">Nice -</div>
<div class="s" style="left:951.21px;top:554.00px;color:#62b24e">F8</div>
<div class="bgr" style="left:965.84px;top:554.00px;width:43.90px;height:12.95px;background:#16b2c2"></div>
<div class="s" style="left:965.84px;top:554.00px;color:#0e1a1a">Nice +</div>
<div class="s" style="left:1009.75px;top:554.00px;color:#62b24e">F9</div>
<div class="bgr" style="left:1024.38px;top:554.00px;width:29.27px;height:12.95px;background:#16b2c2"></div>
<div class="s" style="left:1024.38px;top:554.00px;color:#0e1a1a">Kill</div>
<div class="bgr" style="left:0.00px;top:566.95px;width:1068.28px;height:12.95px;background:#6caa24"></div>
<div class="s" style="left:0.00px;top:566.95px;color:#0a0a0a">[0] &lt;s  1:dfarrell@host-2:~/Projects/perltricks  2:dfarrell@host-2:~/Projects- 3:dfarrell@host-2:~/Projects*&gt; &quot;dfarrell@batch2: ~&quot; 17:39 11-Feb-16</div>
</div></body></html>
